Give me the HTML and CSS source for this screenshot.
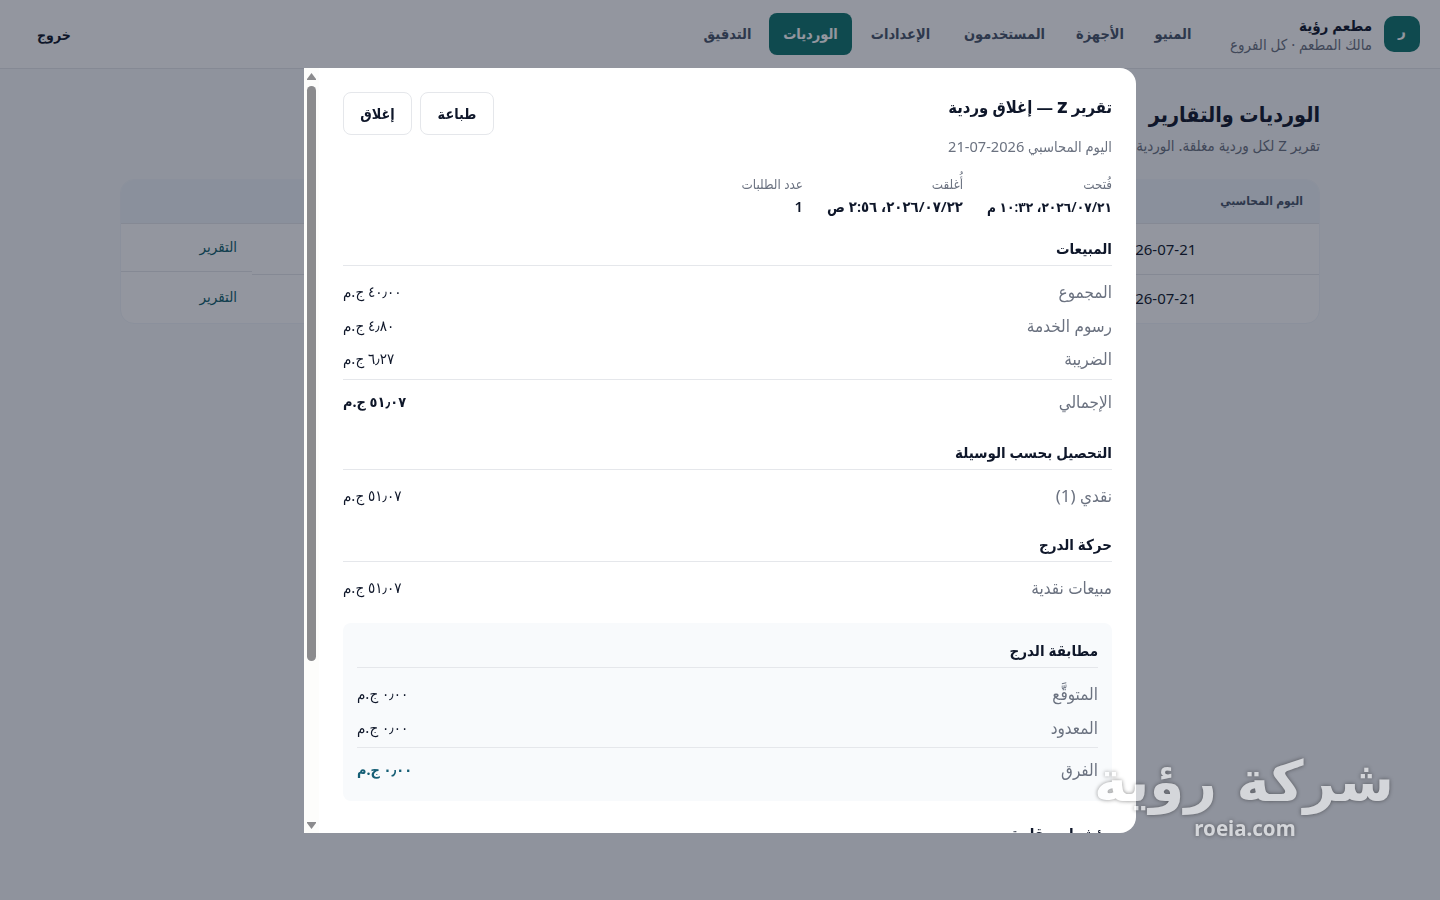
FILE: index.html
```
<!DOCTYPE html>
<html lang="ar" dir="rtl">
<head>
  <meta charset="UTF-8" />
  <meta name="viewport" content="width=device-width, initial-scale=1.0"/>
  <title>الورديات والتقارير</title>
  <link rel="stylesheet" href="styles.css">
</head>
<body>
  <header class="topbar">
    <div class="brand">
      <div class="logo">ر</div>
      <div class="brand-text">
        <strong>مطعم رؤية</strong>
        <span>مالك المطعم · كل الفروع</span>
      </div>
    </div>
    <nav>
      <a class="w-menu" href="#">المنيو</a>
      <a class="w-devices" href="#">الأجهزة</a>
      <a class="w-users" href="#">المستخدمون</a>
      <a class="w-settings" href="#">الإعدادات</a>
      <a class="w-shifts active" href="#">الورديات</a>
      <a class="w-audit" href="#">التدقيق</a>
    </nav>
    <a class="logout" href="#">خروج</a>
  </header>

  <main>
    <h1>الورديات والتقارير</h1>
    <p class="lead">تقرير Z لكل وردية مغلقة. الوردية</p>
    <div class="table">
      <div class="tr th"><div class="day">اليوم المحاسبي</div><div class="fill"></div><div class="act"></div></div>
      <div class="tr"><div class="day" dir="ltr">2026-07-21</div><div class="fill"></div><div class="act"><a href="#">التقرير</a></div></div>
      <div class="tr"><div class="day" dir="ltr">2026-07-21</div><div class="fill"></div><div class="act"><a href="#">التقرير</a></div></div>
    </div>
  </main>

  <div class="overlay">
    <div class="modal">
      <div class="modal-body">
        <div class="modal-head">
          <h2>تقرير <b>Z</b> — إغلاق وردية</h2>
          <div class="buttons">
            <button class="print">طباعة</button>
            <button class="close">إغلاق</button>
          </div>
        </div>
        <p class="sub">اليوم المحاسبي 2026-07-21</p>

        <div class="meta">
          <div class="opened"><small>فُتحت</small><strong>٢٠٢٦/٠٧/٢١، ١٠:٣٢ م</strong></div>
          <div class="closed"><small>أُغلقت</small><strong>٢٠٢٦/٠٧/٢٢، ٢:٥٦ ص</strong></div>
          <div><small>عدد الطلبات</small><strong>1</strong></div>
        </div>

        <section class="sales">
          <h3>المبيعات</h3>
          <div class="row"><span>المجموع</span><em>٤٠٫٠٠ ج.م</em></div>
          <div class="row"><span>رسوم الخدمة</span><em>٤٫٨٠ ج.م</em></div>
          <div class="row"><span>الضريبة</span><em>٦٫٢٧ ج.م</em></div>
          <div class="row total"><span>الإجمالي</span><em>٥١٫٠٧ ج.م</em></div>
        </section>

        <section>
          <h3>التحصيل بحسب الوسيلة</h3>
          <div class="row"><span>نقدي (1)</span><em>٥١٫٠٧ ج.م</em></div>
        </section>

        <section class="drawer">
          <h3>حركة الدرج</h3>
          <div class="row"><span>مبيعات نقدية</span><em>٥١٫٠٧ ج.م</em></div>
        </section>

        <section class="box">
          <h3>مطابقة الدرج</h3>
          <div class="row"><span>المتوقَّع</span><em>٠٫٠٠ ج.م</em></div>
          <div class="row"><span>المعدود</span><em>٠٫٠٠ ج.م</em></div>
          <div class="row total diff"><span>الفرق</span><em>٠٫٠٠ ج.م</em></div>
        </section>

        <section>
          <h3>مؤشرات رقابية</h3>
        </section>
      </div>
      <div class="scrollbar">
        <svg width="9" height="7" viewBox="0 0 9 7"><path d="M4.5 0 9 6v1H0V6z"/></svg>
        <i class="thumb"></i>
        <svg class="down" width="9" height="7" viewBox="0 0 9 7"><path d="M4.5 7 9 1V0H0v1z"/></svg>
      </div>
    </div>
  </div>

  <div class="watermark">
    <div class="wm-name">شركة رؤية</div>
    <div class="wm-url">roeia.com</div>
  </div>
</body>
</html>
```
FILE: styles.css
```
:root {
  --bg: #f8fafc;
  --ink: #0f172a;
  --muted: #6b7280;
  --line: #e5e7eb;
  --brand: #0f766e;
}
* { box-sizing: border-box; }
body {
  margin: 0;
  height: 900px;
  overflow: hidden;
  background: var(--bg);
  color: var(--ink);
  font-family: "Noto Sans", "DejaVu Sans", sans-serif;
  font-stretch: condensed;
  font-size: 15px;
}
a { text-decoration: none; color: inherit; }
h1, h2, h3, p { margin: 0; white-space: nowrap; }
.topbar {
  height: 69px;
  display: flex;
  align-items: center;
  background: #fff;
  border-bottom: 1px solid var(--line);
  padding: 0 20px;
}
.brand {
  display: flex;
  align-items: center;
  gap: 12px;
  width: 214px;
}
.logo {
  width: 36px;
  height: 36px;
  border-radius: 10px;
  background: var(--brand);
  color: #fff;
  font-weight: 700;
  text-align: center;
  line-height: 28px;
}
.brand-text strong, .brand-text span {
  display: block;
  white-space: nowrap;
  line-height: 20px;
}
.brand-text span {
  color: var(--muted);
  line-height: 19px;
}
nav {
  display: flex;
  gap: 4px;
}
nav a {
  height: 42px;
  line-height: 41px;
  border-radius: 8px;
  color: #475569;
  font-size: 14.5px;
  font-weight: 600;
  text-align: center;
  white-space: nowrap;
}
nav a.active {
  background: var(--brand);
  color: #fff;
}
.w-menu { width: 66px; }
.w-devices { width: 72px; }
.w-users { width: 111px; }
.w-settings { width: 89px; }
.w-shifts { width: 83px; }
.w-audit { width: 75px; }
.logout {
  margin-right: auto;
  margin-left: 17px;
  font-size: 14px;
  font-weight: 700;
}
main {
  width: 1200px;
  margin: 0 auto;
  padding-top: 25px;
}
h1 {
  font-size: 21.4px;
  line-height: 39px;
}
.lead {
  color: var(--muted);
  line-height: 24px;
}
.table {
  margin-top: 22px;
  background: #fff;
  border: 1px solid #f1f5f9;
  border-radius: 14px;
  overflow: hidden;
}
.tr {
  display: grid;
  grid-template-columns: 217px 1fr 131px;
  height: 50px;
}
.tr > div {
  border-bottom: 1px solid var(--line);
  padding: 0 16px;
  line-height: 50px;
}
.tr .act {
  height: 48px;
  padding: 0 15px;
  line-height: 45px;
  color: #0e5f6b;
}
.tr.th {
  height: 44px;
  background: #eef4f9;
  color: #475569;
  font-size: 12px;
  font-weight: 600;
}
.tr.th > div {
  height: 44px;
  line-height: 41px;
}
.tr:last-child { height: 49px; }
.tr:last-child > div { border-bottom: 0; }
.tr:last-child .day { line-height: 48px; }
.overlay {
  position: fixed;
  inset: 0;
  background: rgba(15, 23, 42, 0.45);
  display: flex;
  align-items: center;
  justify-content: center;
}
.modal {
  width: 832px;
  height: 765px;
  margin-top: 1px;
  background: #fff;
  border-radius: 0 16px 16px 0;
  overflow: hidden;
  display: flex;
}
.modal-body {
  flex: 1;
  padding: 24px;
  min-width: 0;
}
.modal-head {
  display: flex;
  justify-content: space-between;
  height: 43px;
}
h2 {
  font-size: 16.5px;
  line-height: 29px;
}
.buttons {
  display: flex;
  gap: 8px;
}
button {
  height: 43px;
  background: #fff;
  border: 1px solid var(--line);
  border-radius: 8px;
  color: var(--ink);
  font: inherit;
  font-size: 14.3px;
  font-weight: 600;
  padding: 0;
}
.print { width: 74px; }
.close { width: 69px; }
.sub {
  color: var(--muted);
  font-size: 14.6px;
  line-height: 23px;
}
.meta {
  display: flex;
  gap: 24px;
  margin-top: 16px;
}
.meta small, .meta strong {
  display: block;
  white-space: nowrap;
}
.meta small {
  color: var(--muted);
  font-size: 13.3px;
  line-height: 20px;
}
.meta strong {
  font-size: 14.8px;
  font-weight: 600;
  line-height: 25px;
}
.meta .opened { width: 125px; }
.meta .opened strong { font-size: 13.6px; }
.meta .closed { width: 136px; }
section { height: 92px; }
.sales {
  height: 204px;
  margin-top: 18px;
}
h3 {
  font-size: 15px;
  height: 29px;
  line-height: 22px;
  border-bottom: 1px solid var(--line);
  margin-bottom: 10px;
}
.row {
  display: flex;
  justify-content: space-between;
  height: 33.5px;
  line-height: 31px;
}
.row span {
  color: var(--muted);
  font-size: 17px;
}
.row em { font-style: normal; }
.row.total {
  border-top: 1px solid var(--line);
  margin-top: 2px;
  height: 44px;
  line-height: 43px;
}
.row.total em {
  font-size: 14.4px;
  font-weight: 700;
}
section.drawer { height: 90px; }
section.box {
  height: 178px;
  background: var(--bg);
  border-radius: 8px;
  padding: 16px 14px 0;
  margin-bottom: 21px;
}
.row.diff em { color: #155e75; }
.scrollbar {
  width: 15px;
  background: #fdfdfb;
  display: flex;
  flex-direction: column;
  align-items: center;
  padding: 5px 0 4px;
}
.scrollbar svg { fill: #8b8b8d; }
.thumb {
  width: 9px;
  height: 575px;
  margin-top: 6px;
  border-radius: 5px;
  background: #8b8b8d;
}
.scrollbar .down { margin-top: auto; }
.watermark {
  position: absolute;
  left: 1096px;
  top: 749px;
  width: 298px;
  text-align: center;
  white-space: nowrap;
  font-family: "DejaVu Sans", sans-serif;
  font-stretch: normal;
  font-weight: 700;
  color: #fff;
  opacity: 0.62;
  text-shadow: 0 0 4px rgba(0, 0, 0, 0.7);
}
.wm-name {
  font-size: 56.4px;
  line-height: 66px;
}
.wm-url {
  font-family: "Noto Sans", sans-serif;
  font-size: 20.5px;
  line-height: 26px;
}
```
